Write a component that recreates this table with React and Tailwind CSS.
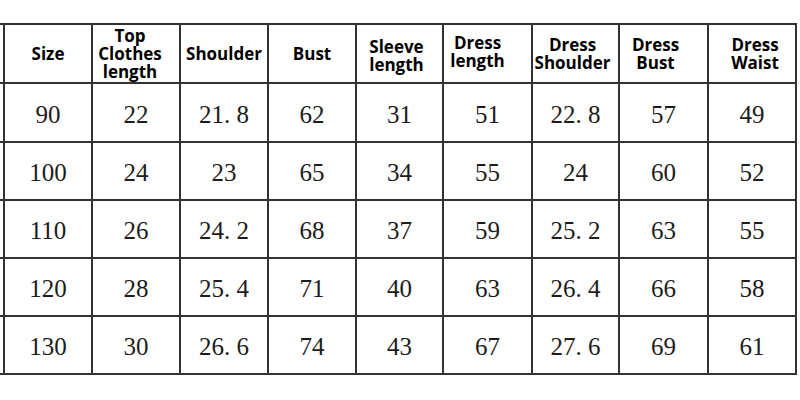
const HEADERS = [
  { lines: ["Size"] },
  { lines: ["Top", "Clothes", "length"], shift: "pr-[12px]" },
  { lines: ["Shoulder"] },
  { lines: ["Bust"] },
  { lines: ["Sleeve", "length"], shift: "pt-[4px] pr-[6px]" },
  { lines: ["Dress", "length"], shift: "pr-[20px] pb-[4px]" },
  { lines: ["Dress", "Shoulder"], shift: "pr-[6px]" },
  { lines: ["Dress", "Bust"], shift: "pr-[16px]" },
  { lines: ["Dress", "Waist"], shift: "pl-[6px]" },
];

const ROWS = [
  ["90", "22", "21. 8", "62", "31", "51", "22. 8", "57", "49"],
  ["100", "24", "23", "65", "34", "55", "24", "60", "52"],
  ["110", "26", "24. 2", "68", "37", "59", "25. 2", "63", "55"],
  ["120", "28", "25. 4", "71", "40", "63", "26. 4", "66", "58"],
  ["130", "30", "26. 6", "74", "43", "67", "27. 6", "69", "61"],
];

export default function App() {
  return (
    <div className="w-[800px] h-[400px] bg-white overflow-hidden">
      <div className="mt-[23px] w-[797px] bg-[#333333] pt-[2px] pr-[2px] pb-[2px] grid gap-[2px] grid-cols-[3px_86px_86px_86px_86px_85px_87px_85px_87px_86px] grid-rows-[57px_57px_56px_56px_56px_56px]">
        {/* header row */}
        <div className="bg-white" />
        {HEADERS.map((h, i) => (
          <div
            key={i}
            className={`bg-white flex flex-col items-center justify-center text-black font-bold text-[17px] leading-[18px] font-['Open_Sans','Liberation_Sans',sans-serif] ${h.shift || ""}`}
          >
            {h.lines.map((l) => (
              <span key={l}>{l}</span>
            ))}
          </div>
        ))}

        {/* data rows */}
        {ROWS.map((row, r) => [
          <div key={`s${r}`} className="bg-white" />,
          ...row.map((v, c) => (
            <div
              key={`${r}-${c}`}
              className="bg-white flex items-center justify-center pt-[3px] text-[#1c1c1c] text-[25px] leading-none whitespace-pre font-['Liberation_Serif','DejaVu_Serif',serif]"
            >
              {v}
            </div>
          )),
        ])}
      </div>
    </div>
  );
}
